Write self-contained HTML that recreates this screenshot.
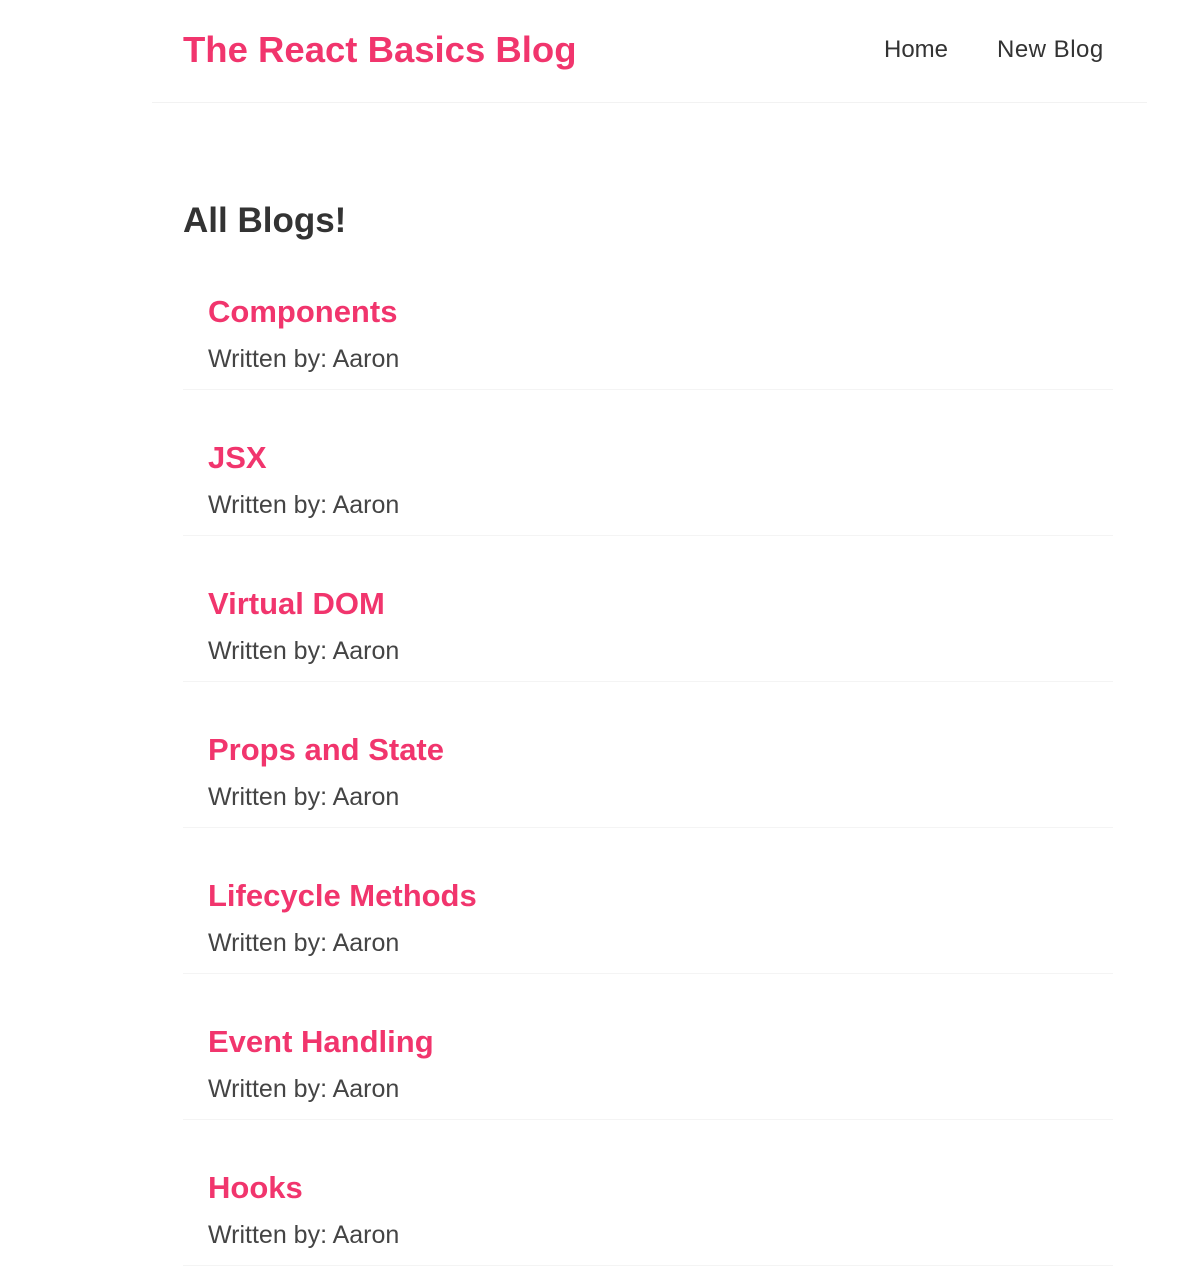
<!DOCTYPE html>
<html><head><meta charset="utf-8"><style>
body{margin:0;background:#fff;font-family:"Liberation Sans",sans-serif;width:1200px;height:1200px;overflow:hidden;position:relative}
.a{position:absolute;white-space:nowrap}
.t{color:#f1356d;font-size:36.5px;font-weight:bold;top:29px;left:183px}
.nav{font-size:24px;color:#333;top:36px}
.hr{position:absolute;left:152px;width:995px;top:102px;height:1px;background:#f2f2f2}
.h2{font-size:35px;font-weight:bold;color:#333;top:201px;left:183px}
.p{position:absolute;left:183px;width:930px;height:92px;border-bottom:1px solid #f4f4f4}
.p h2{position:absolute;left:25px;top:-3px;margin:0;color:#f1356d;font-size:31px;font-weight:bold;white-space:nowrap}
.p div{position:absolute;left:25px;top:48px;font-size:25px;color:#444;white-space:nowrap}
</style></head><body>
<div class="a t">The React Basics Blog</div>
<div class="a nav" style="left:884px">Home</div>
<div class="a nav" style="left:997px;letter-spacing:0.5px">New Blog</div>
<div class="hr"></div>
<div class="a h2">All Blogs!</div>
<div class="p" style="top:297px"><h2>Components</h2><div>Written by: Aaron</div></div>
<div class="p" style="top:443px"><h2>JSX</h2><div>Written by: Aaron</div></div>
<div class="p" style="top:589px"><h2>Virtual DOM</h2><div>Written by: Aaron</div></div>
<div class="p" style="top:735px"><h2>Props and State</h2><div>Written by: Aaron</div></div>
<div class="p" style="top:881px"><h2>Lifecycle Methods</h2><div>Written by: Aaron</div></div>
<div class="p" style="top:1027px"><h2>Event Handling</h2><div>Written by: Aaron</div></div>
<div class="p" style="top:1173px"><h2>Hooks</h2><div>Written by: Aaron</div></div>
</body></html>
